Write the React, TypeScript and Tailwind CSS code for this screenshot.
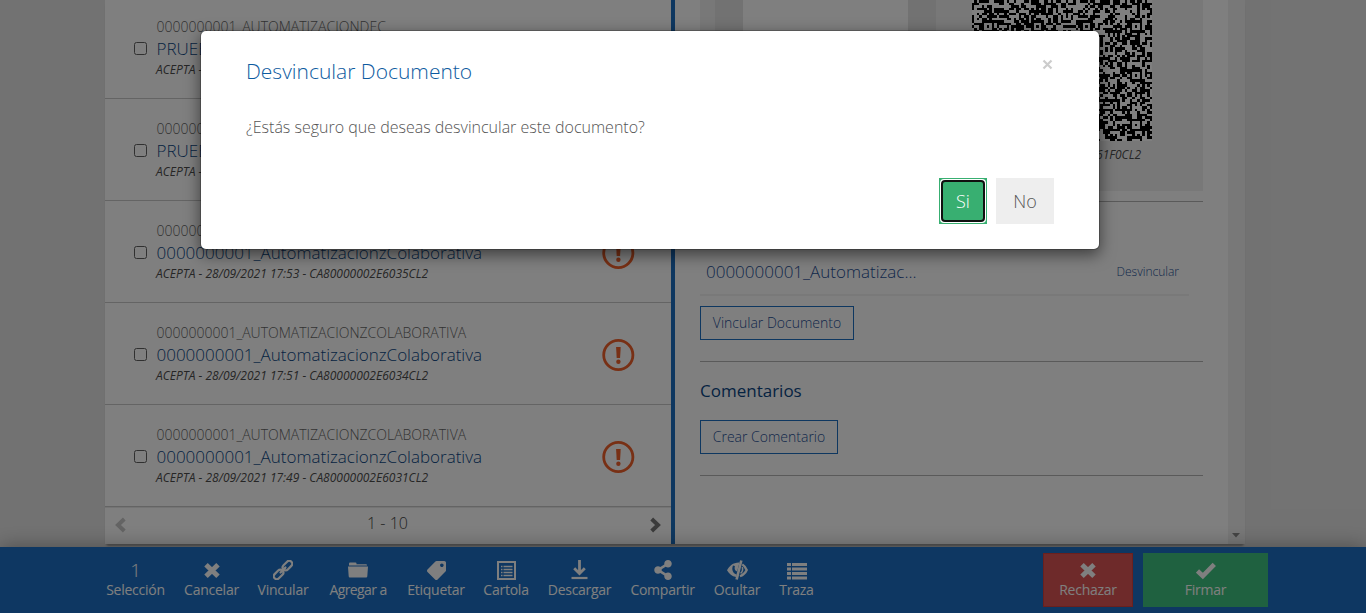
import React from "react";
import { FaTag, FaShareAlt } from "react-icons/fa";

type Doc = { owner: string; title: string; meta: string; alert: boolean };

const docs: Doc[] = [
  { owner: "0000000001_AUTOMATIZACIONDEC", title: "PRUEBA", meta: "ACEPTA - 28/09/2021", alert: false },
  { owner: "0000000001_AUTOMATIZACIONDEC", title: "PRUEBA", meta: "ACEPTA - 28/09/2021", alert: false },
  { owner: "0000000001_AUTOMATIZACIONZCOLABORATIVA", title: "0000000001_AutomatizacionzColaborativa", meta: "ACEPTA - 28/09/2021 17:53 - CA80000002E6035CL2", alert: true },
  { owner: "0000000001_AUTOMATIZACIONZCOLABORATIVA", title: "0000000001_AutomatizacionzColaborativa", meta: "ACEPTA - 28/09/2021 17:51 - CA80000002E6034CL2", alert: true },
  { owner: "0000000001_AUTOMATIZACIONZCOLABORATIVA", title: "0000000001_AutomatizacionzColaborativa", meta: "ACEPTA - 28/09/2021 17:49 - CA80000002E6031CL2", alert: true },
];

function AlertIcon() {
  return (
    <svg width="34" height="34" viewBox="0 0 34 34" fill="none">
      <circle cx="17.300" cy="17" r="14.600" stroke="#f0602a" strokeWidth="2.800" />
      <path d="M15.100 9h4.600l-.6 11h-3.400z" fill="#f0602a" />
      <circle cx="17.400" cy="23.700" r="2.200" fill="#f0602a" />
    </svg>
  );
}

// Version 14 symbol: 73 modules per side, alignment marks every 20 modules.
function QrCode() {
  const n = 73;
  const marks = [6, 26, 46, 66];
  let seed = 20210928;
  const rnd = () => {
    seed = (seed * 1664525 + 1013904223) % 4294967296;
    return seed / 4294967296;
  };
  let d = "";
  for (let y = 0; y < n; y++) {
    for (let x = 0; x < n; x++) {
      let on = rnd() < 0.5;
      if (x === 6) on = y % 2 === 0;
      for (const my of marks) {
        for (const mx of marks) {
          const r = Math.max(Math.abs(x - mx), Math.abs(y - my));
          if (r <= 2) on = r !== 1;
        }
      }
      if (on) d += `M${x} ${y}h1v1h-1z`;
    }
  }
  return (
    <svg width="180" height="180" viewBox="0 0 73 73" shapeRendering="crispEdges" className="shrink-0 bg-white">
      <path d={d} fill="#000" />
    </svg>
  );
}

const CrossIcon = () => (
  <svg width="18" height="20" viewBox="0 0 18 20">
    <path d="M3 4.8l12 11.4M15 4.8L3 16.2" stroke="currentColor" strokeWidth="5" />
  </svg>
);
const CheckIcon = () => (
  <svg width="20" height="20" viewBox="0 0 20 20">
    <path d="M1.5 11l5.3 5L18.3 4.3" fill="none" stroke="currentColor" strokeWidth="4.6" />
  </svg>
);
const ChainIcon = () => (
  <svg width="20" height="20" viewBox="0 0 20 20" fill="none" stroke="currentColor" strokeWidth="2.2">
    <g transform="rotate(-45 10 10)">
      <rect x="-1.800" y="7" width="11" height="6" rx="3" />
      <rect x="10.800" y="7" width="11" height="6" rx="3" />
      <path d="M6.500 10h7" strokeLinecap="round" />
    </g>
  </svg>
);
const FolderIcon = () => (
  <svg width="20" height="20" viewBox="0 0 20 20" fill="currentColor">
    <path d="M1 5.600V3.500a1 1 0 0 1 1-1h5.500a1 1 0 0 1 1 1v.7H18a1 1 0 0 1 1 1v.4z" />
    <path d="M0 6.600h20l-.7 9.700a1.200 1.200 0 0 1-1.200 1.200H1.900a1.200 1.200 0 0 1-1.200-1.200z" />
  </svg>
);
const SheetIcon = () => (
  <svg width="19" height="19" viewBox="0 0 19 19" fill="none" stroke="currentColor">
    <path d="M1 1h17v17H1z" strokeWidth="2" />
    <path d="M4 5.500h1.500M4 8.500h1.500M4 11.500h1.500M4 14.500h1.500M6.500 5.500h9M6.500 8.500h9M6.500 11.500h9M6.500 14.500h9" strokeWidth="1.700" />
  </svg>
);
const DownloadIcon = () => (
  <svg width="17" height="20" viewBox="0 0 17 20" fill="none" stroke="currentColor">
    <path d="M8.500 0v13M3.200 8.200l5.300 5.300 5.300-5.300" strokeWidth="2.800" />
    <path d="M.5 18h16" strokeWidth="2.200" />
  </svg>
);
const HideIcon = () => (
  <svg width="21" height="20" viewBox="0 0 21 20" fill="none" stroke="currentColor">
    <path d="M12.500 2.500C6 2.300 2.500 6 0 10.200c2.200 3.600 5 6.200 9 6.900l.7-2.600C5.800 13.300 4.300 9.500 6 5.500l1.900.6c-.8 2.800 0 4.700 2.200 5.500z" fill="currentColor" stroke="none" />
    <path d="M14.300.500L9.600 19.500" strokeWidth="2.600" />
    <path d="M15.300 4.400c2 1.300 3.500 3.300 4.400 5.600-1.200 2.800-3.600 5-6.700 6.200" strokeWidth="2.300" />
    <path d="M15.300 7c.8 3-.1 5-1.700 6.300" strokeWidth="1.500" />
  </svg>
);
const ListIcon = () => (
  <svg width="20" height="20" viewBox="0 0 20 20" fill="currentColor">
    <path d="M0 3h4v3H0zM5 3h15v3H5zM0 7.500h4v3H0zM5 7.500h15v3H5zM0 12h4v3H0zM5 12h15v3H5zM0 16.500h4v3H0zM5 16.500h15v3H5z" />
  </svg>
);

const actions: { label: string; icon: React.ReactNode; width: string }[] = [
  { label: "Selección", icon: <span className="text-[19px] font-light leading-5">1</span>, width: "w-[60px] tracking-[-0.250px]" },
  { label: "Cancelar", icon: <CrossIcon />, width: "w-[54px] tracking-[-0.250px]" },
  { label: "Vincular", icon: <ChainIcon />, width: "w-[51px] tracking-[-0.250px]" },
  { label: "Agregar a", icon: <FolderIcon />, width: "w-[61px] tracking-[-0.600px]" },
  { label: "Etiquetar", icon: <FaTag size={19} className="-scale-x-100" />, width: "w-[57px] tracking-[-0.250px]" },
  { label: "Cartola", icon: <SheetIcon />, width: "w-[45px] tracking-[-0.250px]" },
  { label: "Descargar", icon: <DownloadIcon />, width: "w-[64px] tracking-[-0.300px]" },
  { label: "Compartir", icon: <FaShareAlt size={20} />, width: "w-[64px] tracking-[-0.250px]" },
  { label: "Ocultar", icon: <HideIcon />, width: "w-[47px] tracking-[-0.250px]" },
  { label: "Traza", icon: <ListIcon />, width: "w-[34px] tracking-[-0.250px]" },
];

function DocumentList() {
  return (
    <section className="flex w-[570px] shrink-0 flex-col border-r-4 border-[#1c6fc0] bg-white">
      <div className="-mt-[3px]">
        {docs.map((doc, i) => (
          <article key={i} className="flex h-[102px] items-start border-b border-[#c8c8c8] pl-[29px] pr-9">
            <span className="mt-[45px] size-[13px] shrink-0 rounded-[2.5px] border border-[#606060]" />
            <div className="ml-[9px] flex-1 whitespace-nowrap pt-5">
              <p className="pl-[0.5px] text-[14px] font-light leading-5 text-[#666]">{doc.owner}</p>
              <p className="pl-[0.5px] text-[17px] font-light leading-6 text-[#0b4684]">{doc.title}</p>
              <p className="text-[12px] italic leading-[18px] text-[#4c4c4c]">{doc.meta}</p>
            </div>
            {doc.alert && <div className="mt-[35px]"><AlertIcon /></div>}
          </article>
        ))}
      </div>
      <div className="flex flex-1 items-center justify-between border-t border-[#e8e8e8] px-2.5 pb-0.5">
        <svg width="11" height="16" viewBox="0 0 11 16" fill="none"><path d="M9.300 2L3 8l6.300 6" stroke="#c8c8c8" strokeWidth="4" /></svg>
        <span className="pb-1 pr-px text-[16px] font-light text-[#444]">1 - 10</span>
        <svg width="11" height="16" viewBox="0 0 11 16" fill="none"><path d="M1.700 2L8 8l-6.300 6" stroke="#777" strokeWidth="4" /></svg>
      </div>
    </section>
  );
}

function OutlineButton({ children, className }: { children: string; className: string }) {
  return (
    <button className={`block h-[34px] border border-[#1c6fc0] pb-0.5 text-[14px] font-light text-[#254f96] ${className}`}>
      {children}
    </button>
  );
}

function DetailPanel() {
  return (
    <section className="flex flex-1 bg-white">
      <div className="w-[553px] pl-[25px] pr-[25px]">
        <div className="flex h-[191px] overflow-hidden bg-[#f1f1f1] pl-[15px]">
          <div className="h-[170px] w-[221px] bg-[#e5e5e5] px-7">
            <div className="h-full bg-white" />
          </div>
          <div className="-mt-[39px] ml-9 w-[180px]">
            <QrCode />
            <p className="mt-[5px] pr-[11px] text-right text-[12px] italic leading-[18px] text-[#4c4c4c]">CA800000008561F0CL2</p>
          </div>
        </div>
        <div className="mt-2.5 h-px bg-[#b5b5b5]" />
        <h3 className="mt-5 text-[17px] leading-6 text-[#0b4684]">Documentos</h3>
        <div className="mt-[2px] flex h-12 w-[489px] items-center justify-between border-b-2 border-[#f3f3f3] pl-1.5 pr-2.5 pt-0.5 text-[#254f96]">
          <span className="text-[17px] font-light">0000000001_Automatizac...</span>
          <span className="text-[12px] font-light">Desvincular</span>
        </div>
        <OutlineButton className="mt-2.5 w-[154px]">Vincular Documento</OutlineButton>
        <div className="mt-[21px] h-px bg-[#b5b5b5]" />
        <h3 className="mt-[17px] text-[17px] leading-6 text-[#0b4684]">Comentarios</h3>
        <OutlineButton className="mt-[17px] w-[138px]">Crear Comentario</OutlineButton>
        <div className="mt-[21px] h-px bg-[#b5b5b5]" />
      </div>
      <div className="flex w-[17px] flex-col justify-end bg-[#f1f1f1] pb-1.5 pl-1">
        <svg width="8" height="5" viewBox="0 0 8 5"><path d="M0 0h8L4 4.500z" fill="#8a8a8a" /></svg>
      </div>
    </section>
  );
}

function ActionBar() {
  return (
    <footer className="relative flex h-[66px] shrink-0 items-center bg-[#1c6fc4] pl-[105.500px] text-white shadow-[0_0_20px_rgba(0,0,0,0.35)]">
      <div className="flex gap-[19px]">
        {actions.map((a) => (
          <div key={a.label} className={`flex flex-col items-center ${a.width}`}>
            <span className="flex h-5 items-center">{a.icon}</span>
            <span className="whitespace-nowrap text-[14px] leading-5">{a.label}</span>
          </div>
        ))}
      </div>
      <div className="ml-auto mr-[98px] flex gap-2.5">
        <button className="flex h-[54px] w-[90px] flex-col items-center border border-[#d4403c] bg-[#dc5555] pt-1.5">
          <CrossIcon />
          <span className="text-[14px] leading-5 tracking-[-0.250px]">Rechazar</span>
        </button>
        <button className="flex h-[54px] w-[125px] flex-col items-center bg-[#3fc380] pt-[7px]">
          <CheckIcon />
          <span className="text-[14px] leading-5 tracking-[-0.250px]">Firmar</span>
        </button>
      </div>
    </footer>
  );
}

function ConfirmDialog() {
  return (
    <div className="absolute inset-0 flex items-start bg-black/50 pl-[200px] pt-[30px]">
      <div className="flex h-[220px] w-[900px] flex-col rounded-md border border-black/20 bg-white bg-clip-padding pl-[45px] pr-[45px] pt-[25px] shadow-[0_5px_15px_rgba(0,0,0,0.5)]">
        <header className="flex items-start justify-between">
          <h2 className="text-[21px] font-light leading-[30px] text-[#0d5ba0]">Desvincular Documento</h2>
          <button aria-label="Cerrar" className="mr-px mt-[3px] text-[#ccc]">
            <svg width="11" height="11" viewBox="0 0 11 11"><path d="M1.500 1.500l8 8M9.500 1.500l-8 8" stroke="currentColor" strokeWidth="2.200" /></svg>
          </button>
        </header>
        <p className="mt-[29px] text-[16px] font-light leading-6 text-[#555]">¿Estás seguro que deseas desvincular este documento?</p>
        <div className="mt-[39px] flex justify-end gap-[9px] text-[18px] font-light">
          <button className="h-[46px] w-12 bg-[#38af71] p-px text-white">
            <span className="block h-full rounded-[4px] bg-white p-px">
              <span className="flex h-full items-center justify-center rounded-[4px] border-2 border-[#101010] bg-[#38af71]">Si</span>
            </span>
          </button>
          <button className="h-[46px] w-[58px] bg-[#eee] text-[#555]">No</button>
        </div>
      </div>
    </div>
  );
}

export default function App() {
  return (
    <div className="relative flex h-[613px] w-full flex-col overflow-hidden bg-[#e5e5e5] font-['Open_Sans',sans-serif]">
      <main className="mb-[3px] ml-[105px] flex h-[544px] w-[1140px] shrink-0 rounded-b shadow-[0_3px_2px_-1px_rgba(0,0,0,0.3)]">
        <DocumentList />
        <DetailPanel />
      </main>
      <ActionBar />
      <ConfirmDialog />
    </div>
  );
}
